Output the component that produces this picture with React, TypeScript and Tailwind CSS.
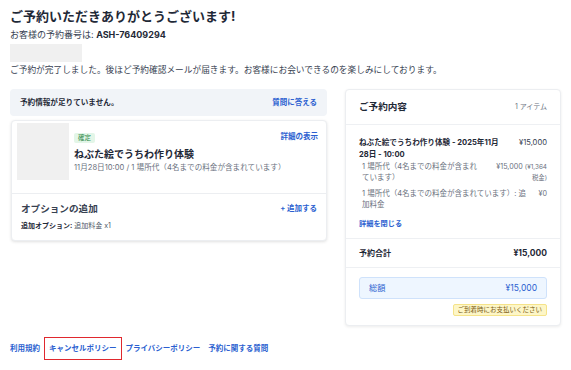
import React from "react";

export default function App() {
  const font = { fontFamily: 'Inter, "Noto Sans CJK JP", sans-serif' };
  return (
    <div className="w-[571px] h-[370px] bg-white text-[#1f2937] overflow-hidden" style={font}>
      <div className="px-[10px] pt-[7px]">
        <h1 className="text-[13px] leading-[18px] font-bold text-[#1f2937]">ご予約いただきありがとうございます!</h1>
        <p className="mt-[3px] text-[9px] leading-[13px] text-[#374151]">
          お客様の予約番号は: <span className="font-bold text-[#1f2937]">ASH-76409294</span>
        </p>
        <div className="mt-[3px] w-[72px] h-[18px] bg-[#f0f0f0]" />
        <p className="mt-[2px] text-[8.7px] leading-[12px] text-[#374151]">
          ご予約が完了しました。後ほど予約確認メールが届きます。お客様にお会いできるのを楽しみにしております。
        </p>

        <div className="mt-[13px] flex gap-[18px] items-start">
          {/* Left column */}
          <div className="w-[317px] flex flex-col">
            <div className="h-[27px] bg-[#f1f4f8] rounded-[4px] flex items-center justify-between px-[10px]">
              <span className="text-[7.6px] font-semibold text-[#1f2937]">予約情報が足りていません。</span>
              <span className="text-[7.5px] font-bold text-[#2b5fd0]">質問に答える</span>
            </div>
            <div className="mt-[4px] ml-[1px] border border-[#eceef1] rounded-[4px] shadow-[0_1px_3px_rgba(0,0,0,0.12)] bg-white">
              <div className="flex pl-[5px] pr-[8px] pt-[2px] pb-[13px]">
                <div className="w-[52px] h-[57px] bg-[#f0f0f0] shrink-0" />
                <div className="ml-[5px] flex-1 pt-[10px]">
                  <div className="flex justify-between items-start">
                    <span className="inline-block bg-[#e3f6e8] text-[#2f8a4a] text-[6.5px] leading-[10px] px-[4px] rounded-[2px]">確定</span>
                    <span className="text-[7.5px] font-bold text-[#2b5fd0] leading-[10px] -mt-[1px]">詳細の表示</span>
                  </div>
                  <div className="mt-[4px] text-[10px] leading-[14px] font-bold text-[#1f2937]">ねぶた絵でうちわ作り体験</div>
                  <div className="mt-[1px] text-[7.6px] leading-[12px] text-[#6b7280]">11月28日10:00 / 1 場所代（4名までの料金が含まれています）</div>
                </div>
              </div>
              <div className="border-t border-[#eceef1] px-[9px] pt-[8px] pb-[9px]">
                <div className="flex justify-between items-center">
                  <span className="text-[9.6px] leading-[14px] font-bold text-[#374151]">オプションの追加</span>
                  <span className="text-[7.5px] font-bold text-[#2b5fd0]">+ 追加する</span>
                </div>
                <div className="mt-[5px] text-[7px] leading-[10px] text-[#4b5563]">
                  <span className="font-bold text-[#1f2937]">追加オプション:</span> 追加料金 x1
                </div>
              </div>
            </div>
          </div>

          {/* Right column */}
          <div className="w-[216px] border border-[#eceef1] rounded-[4px] shadow-[0_1px_3px_rgba(0,0,0,0.08)] bg-white">
            <div className="h-[34px] flex items-center justify-between px-[13px]">
              <span className="text-[9.6px] font-semibold text-[#1f2937]">ご予約内容</span>
              <span className="text-[7px] text-[#6b7280]">1 アイテム</span>
            </div>
            <div className="border-t border-[#eef0f3] px-[13px] pt-[12px] pb-[9px]">
              <div className="flex justify-between gap-[6px]">
                <span className="text-[7.6px] leading-[12px] font-bold text-[#1f2937] w-[145px]">ねぶた絵でうちわ作り体験 - 2025年11月28日 - 10:00</span>
                <span className="text-[7.6px] leading-[12px] text-[#374151]">¥15,000</span>
              </div>
              <div className="mt-[0px] flex justify-between gap-[4px] pl-[3px]">
                <span className="text-[7.5px] leading-[11px] text-[#6b7280] w-[121px]">1 場所代（4名までの料金が含まれています）</span>
                <span className="text-[7.2px] leading-[11px] text-[#6b7280] text-right">
                  <span className="block whitespace-nowrap">¥15,000 <span className="text-[6.4px]">(¥1,364</span></span>
                  <span className="block text-[6.4px]">税金)</span>
                </span>
              </div>
              <div className="mt-[4px] flex justify-between gap-[4px] pl-[3px]">
                <span className="text-[7.5px] leading-[11px] text-[#6b7280] w-[168px]">1 場所代（4名までの料金が含まれています）: 追加料金</span>
                <span className="text-[7.2px] leading-[11px] text-[#6b7280]">¥0</span>
              </div>
              <div className="mt-[9px] text-[7.2px] leading-[10px] font-bold text-[#2b5fd0]">詳細を閉じる</div>
            </div>
            <div className="border-t border-[#eef0f3] h-[29px] flex items-center justify-between px-[13px]">
              <span className="text-[8px] font-bold text-[#1f2937]">予約合計</span>
              <span className="text-[8.5px] font-bold text-[#1f2937]">¥15,000</span>
            </div>
            <div className="border-t border-[#eef0f3] px-[13px] pt-[9px] pb-[9px]">
              <div className="h-[22px] bg-[#eef6ff] border border-[#cfe2fb] rounded-[3px] flex items-center justify-between px-[9px]">
                <span className="text-[8.2px] text-[#2b5fd0]">総額</span>
                <span className="text-[8.5px] text-[#2b5fd0]">¥15,000</span>
              </div>
              <div className="mt-[5px] flex justify-end">
                <span className="bg-[#fdf6c7] border border-[#f5e38a] rounded-[2px] text-[6.5px] leading-[10px] px-[4px] text-[#7a5a12]">ご到着時にお支払いください</span>
              </div>
            </div>
          </div>
        </div>

        <div className="mt-[11px] -ml-[4px] flex items-center">
          <span className="px-[4px] py-[5px] text-[7.5px] font-bold text-[#2b5fd0]">利用規約</span>
          <span className="px-[4px] py-[5px] border border-[#e0282e] text-[7.5px] font-bold text-[#2b5fd0]">キャンセルポリシー</span>
          <span className="px-[4px] py-[5px] text-[7.5px] font-bold text-[#2b5fd0]">プライバシーポリシー</span>
          <span className="px-[4px] py-[5px] text-[7.5px] font-bold text-[#2b5fd0]">予約に関する質問</span>
        </div>
      </div>
    </div>
  );
}
